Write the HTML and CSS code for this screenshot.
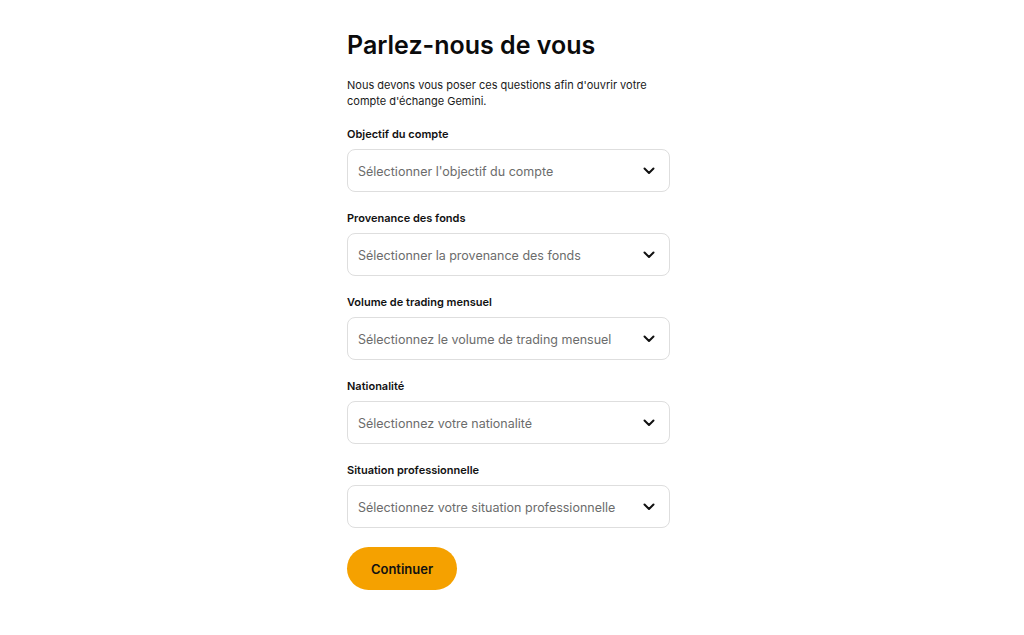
FILE: index.html
```html
<!DOCTYPE html>
<html lang="fr">
<head>
  <meta charset="UTF-8">
  <title>Parlez-nous de vous – Gemini</title>
  <link rel="stylesheet" href="styles.css">
</head>
<body>
  <div class="page">
    <form class="form" onsubmit="return false">
      <h1>Parlez-nous de vous</h1>
      <p class="intro">Nous devons vous poser ces questions afin d'ouvrir votre compte d'échange Gemini.</p>

      <div class="field">
        <label>Objectif du compte</label>
        <div class="select">
          <span>Sélectionner l'objectif du compte</span>
          <svg class="chevron" width="12" height="8" viewBox="0 0 12 8"><path d="M1.5 1.5 6 6l4.5-4.5" /></svg>
        </div>
      </div>

      <div class="field">
        <label>Provenance des fonds</label>
        <div class="select">
          <span>Sélectionner la provenance des fonds</span>
          <svg class="chevron" width="12" height="8" viewBox="0 0 12 8"><path d="M1.5 1.5 6 6l4.5-4.5" /></svg>
        </div>
      </div>

      <div class="field">
        <label>Volume de trading mensuel</label>
        <div class="select">
          <span>Sélectionnez le volume de trading mensuel</span>
          <svg class="chevron" width="12" height="8" viewBox="0 0 12 8"><path d="M1.5 1.5 6 6l4.5-4.5" /></svg>
        </div>
      </div>

      <div class="field">
        <label>Nationalité</label>
        <div class="select">
          <span>Sélectionnez votre nationalité</span>
          <svg class="chevron" width="12" height="8" viewBox="0 0 12 8"><path d="M1.5 1.5 6 6l4.5-4.5" /></svg>
        </div>
      </div>

      <div class="field">
        <label>Situation professionnelle</label>
        <div class="select">
          <span>Sélectionnez votre situation professionnelle</span>
          <svg class="chevron" width="12" height="8" viewBox="0 0 12 8"><path d="M1.5 1.5 6 6l4.5-4.5" /></svg>
        </div>
      </div>

      <button class="submit" type="submit">Continuer</button>
    </form>
  </div>
</body>
</html>
```

FILE: styles.css
```css
body {
  margin: 0;
  background: #fff;
  font-family: Inter, "Noto Sans", sans-serif;
  color: #111;
}

.page {
  display: flex;
  justify-content: center;
  padding: 29px 7px 40px 0;
}

.form {
  width: 323px;
  display: flex;
  flex-direction: column;
}

h1 {
  margin: 0;
  font-size: 25px;
  line-height: 32px;
  font-weight: 600;
  color: #0b0b0b;
}

.intro {
  margin: 16px 0 0;
  font-size: 11px;
  line-height: 16px;
  color: #1a1a1a;
}

.field {
  margin-top: 17px;
  display: flex;
  flex-direction: column;
}

.field + .field {
  margin-top: 18px;
}

label {
  font-size: 11px;
  line-height: 16px;
  font-weight: 600;
  color: #111;
  margin-bottom: 7px;
}

.select {
  height: 43px;
  box-sizing: border-box;
  border: 1px solid #dedede;
  border-radius: 8px;
  padding: 1px 14px 0 10px;
  display: flex;
  align-items: center;
  justify-content: space-between;
  cursor: pointer;
}

.select span {
  font-size: 12.5px;
  color: #6c6c6c;
}

.chevron path {
  fill: none;
  stroke: #111;
  stroke-width: 2;
  stroke-linecap: round;
  stroke-linejoin: round;
}

.submit {
  align-self: flex-start;
  margin-top: 19px;
  width: 110px;
  height: 43px;
  border: none;
  border-radius: 22px;
  background: #f5a100;
  font-family: inherit;
  font-size: 13px;
  font-weight: 600;
  color: #111;
  cursor: pointer;
}
```
